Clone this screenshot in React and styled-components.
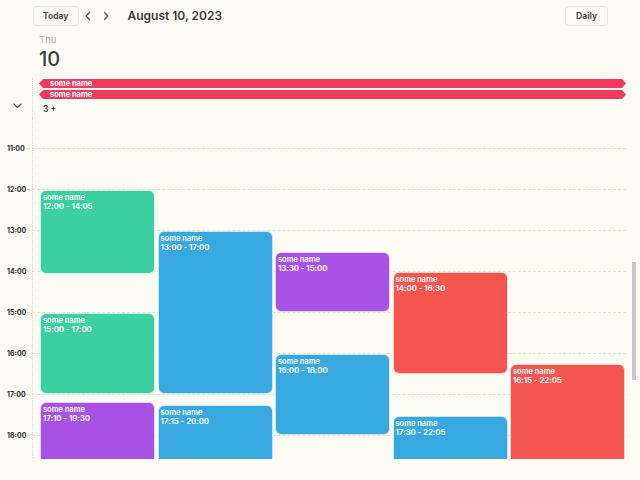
import React from "react";
import styled, { createGlobalStyle } from "styled-components";

const Global = createGlobalStyle`
  html, body { margin: 0; padding: 0; background: #fcfcf5; }
  body { font-family: Inter, "Noto Sans", sans-serif; color: #3a3a3a; }
  * { box-sizing: border-box; }
`;

const HOUR = 41;
const FIRST = 11;
const LEAD = 30;

const COLORS = {
  green: "#3ccfa2",
  blue: "#38a8e0",
  purple: "#a752e4",
  red: "#f4554f",
  allday: "#f23b5c",
};

const Page = styled.div`
  width: 640px;
  height: 480px;
  display: flex;
  flex-direction: column;
  overflow: hidden;
`;

const Toolbar = styled.div`
  height: 31px;
  display: flex;
  align-items: center;
  padding: 0 32px 0 33px;
`;

const PillButton = styled.button`
  height: 20px;
  padding: 0 ${(p) => p.$pad || 10}px;
  border: 1px solid #e6e6da;
  border-radius: 4px;
  background: transparent;
  font-family: inherit;
  font-size: 8.5px;
  font-weight: 700;
  color: #4a4a4a;
  cursor: pointer;
`;

const NavGroup = styled.div`
  display: flex;
  align-items: center;
  gap: 8px;
  margin-left: 4px;
`;

const NavIcon = styled.svg`
  width: 10px;
  height: 10px;
  display: block;
`;

const Title = styled.h1`
  margin: 0 0 0 17px;
  font-size: 12px;
  font-weight: 600;
  color: #3a3a3a;
`;

const Spacer = styled.div`
  flex: 1;
`;

const DayHeader = styled.div`
  display: flex;
  flex-direction: column;
  padding: 2px 0 0 39px;
  height: 47px;
`;

const DayName = styled.div`
  font-size: 9.5px;
  color: #b0b0a8;
  line-height: 14px;
`;

const DayNum = styled.div`
  font-size: 20px;
  font-weight: 500;
  color: #3e3e3e;
  line-height: 24px;
`;

const AllDay = styled.div`
  display: flex;
  height: 40px;
`;

const Gutter = styled.div`
  width: 33px;
  flex-shrink: 0;
  border-right: 1px dotted #d4d4e6;
  display: flex;
  align-items: flex-end;
  justify-content: center;
  padding: 0 0 9px 3px;
`;

const AllDayList = styled.div`
  flex: 1;
  display: flex;
  flex-direction: column;
  gap: 2px;
  padding: 1px 14px 0 6px;
`;

const AllDayBar = styled.div`
  height: 9px;
  background: ${(p) => p.$color};
  clip-path: polygon(4px 0, calc(100% - 4px) 0, 100% 50%, calc(100% - 4px) 100%, 4px 100%, 0 50%);
  color: #fff;
  font-size: 7.5px;
  font-weight: 700;
  line-height: 9px;
  padding-left: 11px;
`;

const More = styled.div`
  font-size: 8.5px;
  font-weight: 600;
  color: #333;
  padding: 3px 0 0 4px;
`;

const Body = styled.div`
  height: 341px;
  display: flex;
`;

const Viewport = styled.div`
  flex: 1;
  position: relative;
  overflow: hidden;
`;

const ScrollTrack = styled.div`
  width: 10px;
  flex-shrink: 0;
  padding: 144px 4px 0 2px;
`;

const ScrollThumb = styled.div`
  height: 118px;
  background: #c9c9c9;
`;

const LeadRow = styled.div`
  height: ${LEAD}px;
  display: flex;
`;

const HourRow = styled.div`
  height: ${HOUR}px;
  display: flex;
  align-items: flex-start;
`;

const HourLabel = styled.div`
  width: 33px;
  flex-shrink: 0;
  align-self: stretch;
  border-right: 1px dotted #d4d4e6;
`;

const LabelText = styled.span`
  display: block;
  padding-left: 7px;
  font-size: 7px;
  font-weight: 700;
  color: #2e2e2e;
  transform: translateY(-50%);
`;

const HourLine = styled.div`
  flex: 1;
  margin-left: -6px;
  margin-right: 4px;
  border-top: 1px dashed #e2e2cc;
`;

const EventLayer = styled.div`
  position: absolute;
  top: ${LEAD}px;
  left: 40px;
  width: 587.5px;
  height: 1000px;
`;

const EventCard = styled.div`
  position: absolute;
  border-radius: 6px;
  background: ${(p) => p.$color};
  border: 1px solid rgba(255, 255, 255, 0.75);
  color: #fff;
  padding: 3px 2px;
  overflow: hidden;
`;

const EventName = styled.div`
  font-size: 7.5px;
  font-weight: 600;
  line-height: 8px;
`;

const EventTime = styled.div`
  font-size: 8px;
  font-weight: 600;
  line-height: 9px;
  letter-spacing: -0.1px;
`;

const Chevron = ({ dir }) => (
  <NavIcon viewBox="0 0 10 10">
    <path
      d={dir === "left" ? "M6.5 1.5 L3 5 L6.5 8.5" : "M3.5 1.5 L7 5 L3.5 8.5"}
      fill="none"
      stroke="#555"
      strokeWidth="1.3"
      strokeLinecap="round"
      strokeLinejoin="round"
    />
  </NavIcon>
);

const DownChevron = () => (
  <svg width="9" height="6" viewBox="0 0 9 6">
    <path d="M1 1 L4.5 4.5 L8 1" fill="none" stroke="#555" strokeWidth="1.1" strokeLinecap="round" strokeLinejoin="round" />
  </svg>
);

const events = [
  { col: 0, start: 12, end: 14 + 5 / 60, color: COLORS.green, time: "12:00 - 14:05" },
  { col: 0, start: 15, end: 17, color: COLORS.green, time: "15:00 - 17:00" },
  { col: 0, start: 17 + 10 / 60, end: 19.5, color: COLORS.purple, time: "17:10 - 19:30" },
  { col: 1, start: 13, end: 17, color: COLORS.blue, time: "13:00 - 17:00" },
  { col: 1, start: 17.25, end: 20, color: COLORS.blue, time: "17:15 - 20:00" },
  { col: 2, start: 13.5, end: 15, color: COLORS.purple, time: "13:30 - 15:00" },
  { col: 2, start: 16, end: 18, color: COLORS.blue, time: "16:00 - 18:00" },
  { col: 3, start: 14, end: 16.5, color: COLORS.red, time: "14:00 - 16:30" },
  { col: 3, start: 17.5, end: 22 + 5 / 60, color: COLORS.blue, time: "17:30 - 22:05" },
  { col: 4, start: 16.25, end: 22 + 5 / 60, color: COLORS.red, time: "16:15 - 22:05" },
];

const hours = Array.from({ length: 8 }, (_, i) => `${String(FIRST + i).padStart(2, "0")}:00`);

export default function App() {
  return (
    <Page>
      <Global />
      <Toolbar>
        <PillButton $pad={9}>Today</PillButton>
        <NavGroup>
          <Chevron dir="left" />
          <Chevron dir="right" />
        </NavGroup>
        <Title>August 10, 2023</Title>
        <Spacer />
        <PillButton $pad={10}>Daily</PillButton>
      </Toolbar>
      <DayHeader>
        <DayName>Thu</DayName>
        <DayNum>10</DayNum>
      </DayHeader>
      <AllDay>
        <Gutter>
          <DownChevron />
        </Gutter>
        <AllDayList>
          <AllDayBar $color={COLORS.allday}>some name</AllDayBar>
          <AllDayBar $color={COLORS.allday}>some name</AllDayBar>
          <More>3 +</More>
        </AllDayList>
      </AllDay>
      <Body>
        <Viewport>
          <LeadRow>
            <HourLabel />
          </LeadRow>
          {hours.map((h) => (
            <HourRow key={h}>
              <HourLabel>
                <LabelText>{h}</LabelText>
              </HourLabel>
              <HourLine />
            </HourRow>
          ))}
          <EventLayer>
            {events.map((e, i) => (
              <EventCard
                key={i}
                $color={e.color}
                style={{
                  top: (e.start - FIRST) * HOUR + 1,
                  height: (e.end - e.start) * HOUR - 1,
                  left: `${e.col * 20}%`,
                  width: "calc(20% - 2.5px)",
                }}
              >
                <EventName>some name</EventName>
                <EventTime>{e.time}</EventTime>
              </EventCard>
            ))}
          </EventLayer>
        </Viewport>
        <ScrollTrack>
          <ScrollThumb />
        </ScrollTrack>
      </Body>
    </Page>
  );
}
